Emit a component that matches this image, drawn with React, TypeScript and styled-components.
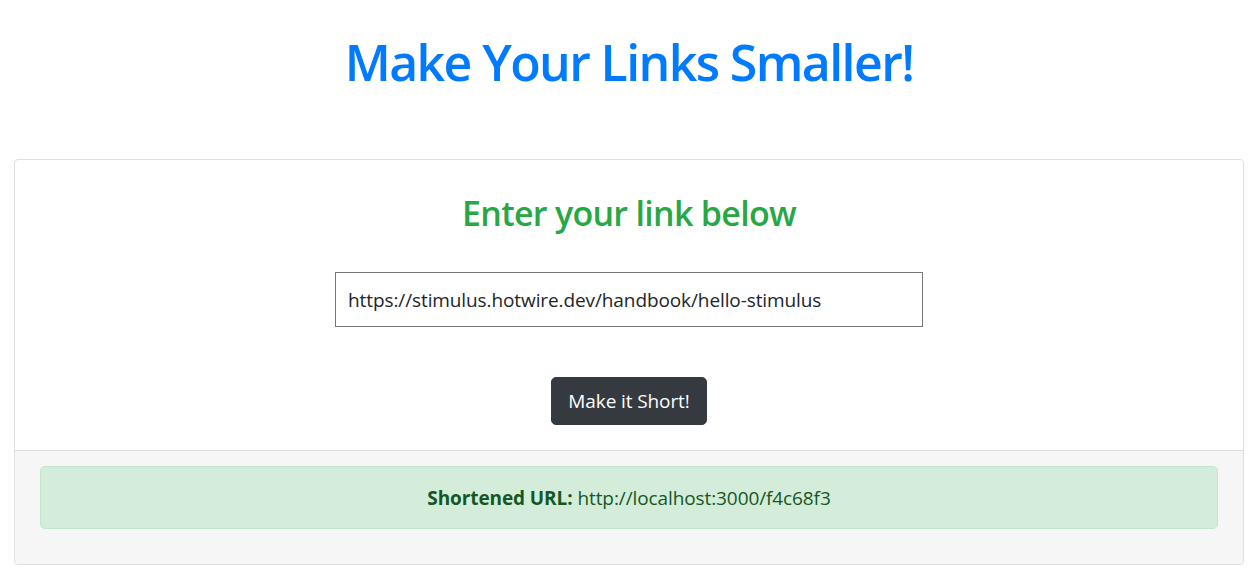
import React from "react";
import styled, { createGlobalStyle } from "styled-components";

const Global = createGlobalStyle`
  html, body { margin: 0; padding: 0; background: #fff; }
  body { font-family: "Open Sans", "Noto Sans", sans-serif; color: #212529; }
  * { box-sizing: border-box; }
`;

const Page = styled.div`
  padding: 0 15px 0 14px;
`;

const Title = styled.h1`
  margin: 0;
  height: 159px;
  padding-top: 26px;
  text-align: center;
  font-size: 50px;
  font-weight: 600;
  line-height: 72px;
  color: #007bff;
  letter-spacing: -1.6px;
`;

const Card = styled.div`
  border: 1px solid #dfdfdf;
  border-radius: 4px;
  overflow: hidden;
  background: #fff;
`;

const CardBody = styled.form`
  display: flex;
  flex-direction: column;
  align-items: center;
  padding: 30px 20px 25px;
`;

const Subtitle = styled.h2`
  margin: 0;
  font-size: 34px;
  font-weight: 600;
  line-height: 46px;
  color: #28a745;
  letter-spacing: -0.7px;
`;

const Input = styled.input`
  margin-top: 36px;
  width: 588px;
  height: 55px;
  border: 1px solid #767676;
  border-radius: 0;
  padding: 0 12px;
  font-family: inherit;
  font-size: 19px;
  color: #212529;
  letter-spacing: -0.1px;
  outline: none;
`;

const Button = styled.button`
  margin-top: 50px;
  height: 48px;
  padding: 0 16px;
  background: #343a40;
  border: 1px solid #343a40;
  border-radius: 5px;
  color: #fff;
  font-family: inherit;
  font-size: 19px;
  letter-spacing: -0.1px;
  cursor: pointer;
`;

const Footer = styled.div`
  background: #f6f6f6;
  border-top: 1px solid #dcdcdc;
  padding: 15px 25px 35px;
`;

const Alert = styled.div`
  height: 63px;
  display: flex;
  align-items: center;
  justify-content: center;
  background: #d4edda;
  border: 1px solid #c3e6cb;
  border-radius: 5px;
  color: #155724;
  font-size: 19px;
  letter-spacing: -0.1px;
`;

const Strong = styled.strong`
  font-weight: 700;
  margin-right: 5px;
`;

export default function App() {
  return (
    <Page>
      <Global />
      <Title>Make Your Links Smaller!</Title>
      <Card>
        <CardBody onSubmit={(e) => e.preventDefault()}>
          <Subtitle>Enter your link below</Subtitle>
          <Input
            type="text"
            defaultValue="https://stimulus.hotwire.dev/handbook/hello-stimulus"
          />
          <Button type="submit">Make it Short!</Button>
        </CardBody>
        <Footer>
          <Alert>
            <Strong>Shortened URL:</Strong>
            <span>http://localhost:3000/f4c68f3</span>
          </Alert>
        </Footer>
      </Card>
    </Page>
  );
}
